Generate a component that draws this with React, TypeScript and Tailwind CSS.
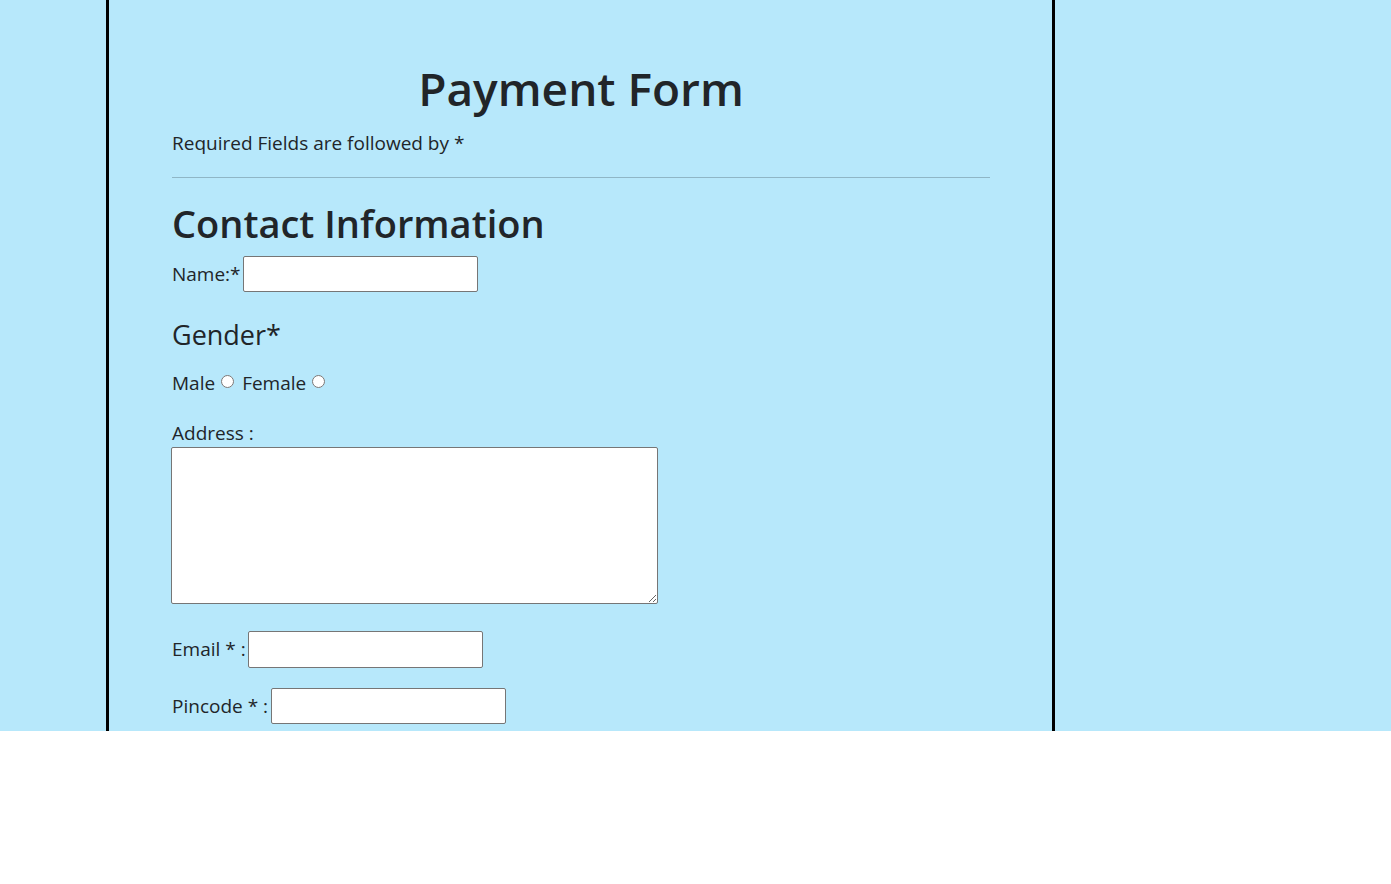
export default function App() {
	return (
		<div className="w-full min-h-[884px] bg-white" style={{ fontFamily: '"Open Sans", "Noto Sans", sans-serif' }}>
			<div className="h-[731px] bg-[#b7e8fb] overflow-hidden text-[#212529]">
				<div className="ml-[106px] w-[949px] h-full border-x-[3px] border-black pl-[63px] pr-[62px]">
					<h1 className="pt-[60px] text-center text-[46px] leading-[56px] font-semibold">Payment Form</h1>
					<p className="mt-[13px] text-[19px] leading-[28px]">Required Fields are followed by *</p>
					<hr className="mt-[20px] border-t border-[#8fb6c6]" />
					<h2 className="mt-[22px] text-[38px] leading-[46px] font-semibold">Contact Information</h2>
					<div className="flex items-center mt-[10px] text-[19px]">
						<label htmlFor="name">Name:*</label>
						<input id="name" type="text" className="ml-[2px] w-[235px] h-[36px] bg-white border border-[#767676] rounded-[2px]" />
					</div>
					<h3 className="mt-[26px] text-[27px] leading-[34px]">Gender*</h3>
					<div className="flex items-center mt-[17px] text-[19px] leading-[28px]">
						<span>Male</span>
						<input type="radio" name="gender" className="ml-[6px] mr-[8px] w-[13px] h-[13px] -mt-[3px]" />
						<span>Female</span>
						<input type="radio" name="gender" className="ml-[6px] w-[13px] h-[13px] -mt-[3px]" />
					</div>
					<p className="mt-[22px] text-[19px] leading-[28px]">Address :</p>
					<textarea className="block -ml-px w-[487px] h-[157px] bg-white border border-[#767676] rounded-[2px]"></textarea>
					<div className="flex items-center mt-[27px] text-[19px]">
						<label htmlFor="email">Email * :</label>
						<input id="email" type="email" className="ml-[2px] w-[235px] h-[37px] bg-white border border-[#767676] rounded-[2px]" />
					</div>
					<div className="flex items-center mt-[20px] text-[19px]">
						<label htmlFor="pin">Pincode * :</label>
						<input id="pin" type="text" className="ml-[3px] w-[235px] h-[36px] bg-white border border-[#767676] rounded-[2px]" />
					</div>
				</div>
			</div>
		</div>
	)
}
